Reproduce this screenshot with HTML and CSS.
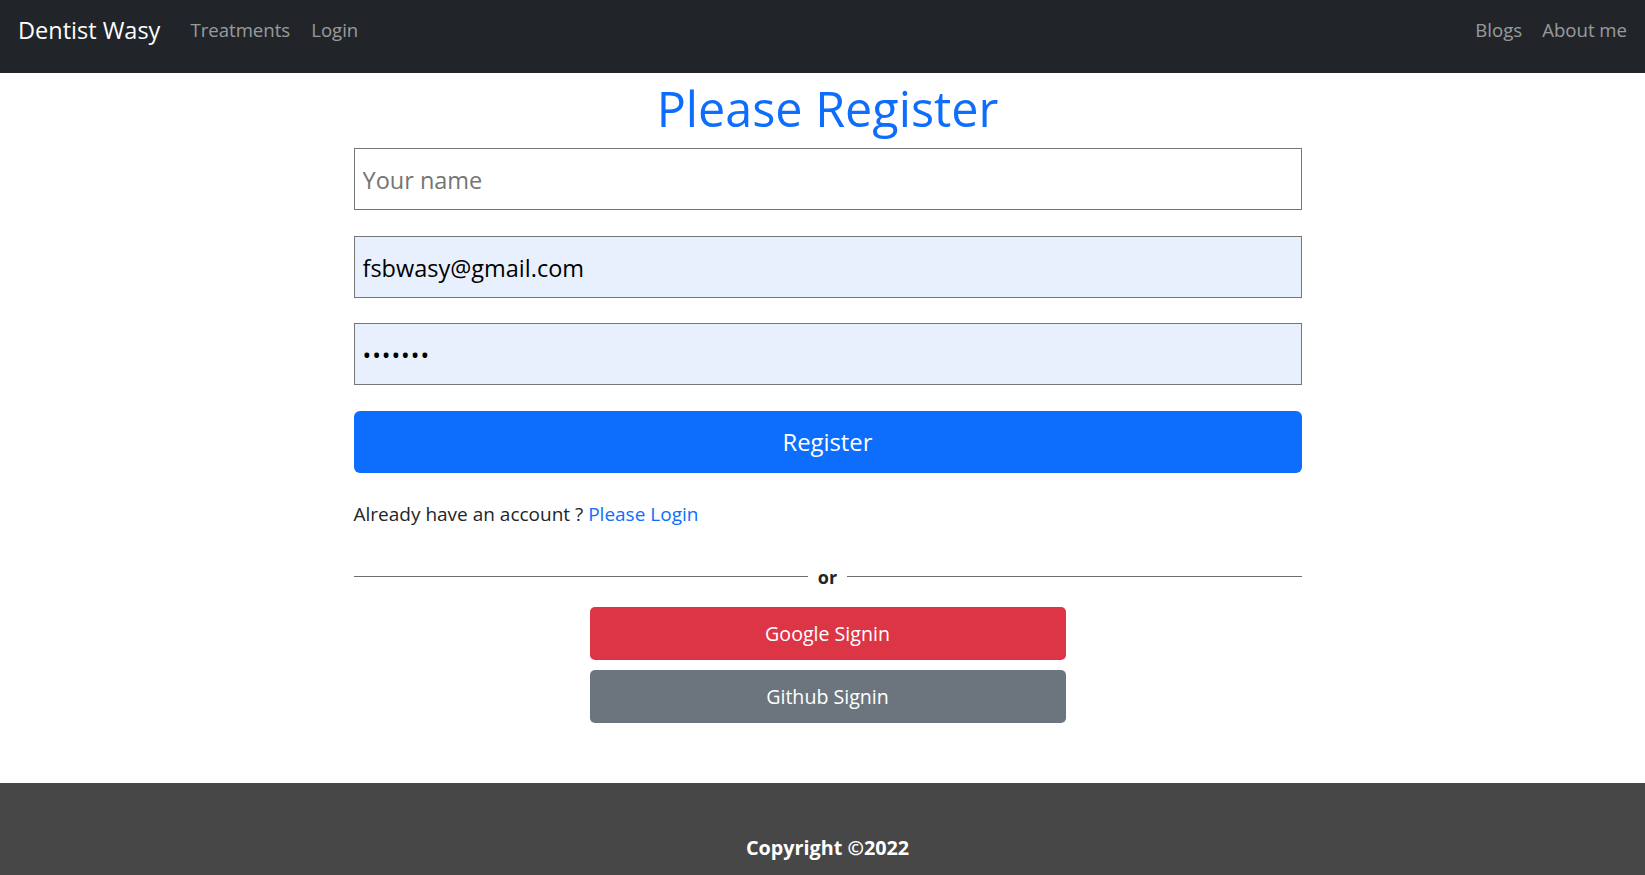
FILE: index.html
```html
<!DOCTYPE html>
<html lang="en">
<head>
<meta charset="utf-8">
<title>Dentist Wasy - Register</title>
<link rel="stylesheet" href="styles.css">
</head>
<body>
<nav class="navbar">
  <div class="nav-left">
    <a class="brand" href="#">Dentist Wasy</a>
    <a class="nav-link" href="#">Treatments</a>
    <a class="nav-link" href="#">Login</a>
  </div>
  <div class="nav-right">
    <a class="nav-link" href="#">Blogs</a>
    <a class="nav-link" href="#">About me</a>
  </div>
</nav>
<main class="page">
  <div class="register">
    <h1 class="title">Please Register</h1>
    <form class="form">
      <input class="field" type="text" placeholder="Your name">
      <input class="field autofill" type="email" value="fsbwasy@gmail.com">
      <input class="field autofill" type="password" value="1234567">
      <button class="btn-primary" type="button">Register</button>
    </form>
    <p class="already">Already have an account ? <a href="#" class="link">Please Login</a></p>
    <div class="divider"><span class="line"></span><span class="or">or</span><span class="line"></span></div>
    <div class="social">
      <button class="btn-social google" type="button">Google Signin</button>
      <button class="btn-social github" type="button">Github Signin</button>
    </div>
  </div>
</main>
<footer class="footer">
  <p class="copy">Copyright ©2022</p>
</footer>
</body>
</html>
```
FILE: styles.css
```css
* { box-sizing: border-box; }
html, body { margin: 0; padding: 0; }
body {
  font-family: "Open Sans", "Noto Sans", sans-serif;
  color: #212529;
  background: #fff;
  overflow: hidden;
}
a { text-decoration: none; }

.navbar {
  height: 73px;
  background: #212529;
  display: flex;
  justify-content: space-between;
  align-items: flex-start;
  padding: 14px 18px 0 18px;
}
.nav-left, .nav-right {
  display: flex;
  align-items: center;
  gap: 21px;
}
.nav-right { gap: 20px; }
.brand {
  color: #fff;
  font-size: 23.5px;
  line-height: 32px;
  margin-right: 9px;
}
.nav-link {
  color: rgba(255,255,255,.55);
  font-size: 18.6px;
  line-height: 32px;
}

.page { padding-left: 10px; }
.register {
  width: 948px;
  margin: 0 auto;
}
.title {
  margin: 8px 0 0 0;
  text-align: center;
  color: #0d6efd;
  font-size: 48.5px;
  font-weight: 500;
  line-height: 55px;
}
.form {
  margin-top: 12px;
  display: flex;
  flex-direction: column;
  gap: 25.5px;
}
.field {
  height: 62px;
  border: 1px solid #767676;
  border-radius: 0;
  padding: 2px 8px 0 8px;
  font-family: inherit;
  font-size: 23.5px;
  color: #000;
  background: #fff;
  outline: none;
}
.field::placeholder { color: #757575; }
.field.autofill { background: #e8f0fe; }
.field[type=password] { letter-spacing: 1px; font-size: 23px; }
.btn-primary {
  height: 62px;
  border: none;
  border-radius: 6px;
  background: #0d6efd;
  color: #fff;
  font-family: inherit;
  font-size: 23.8px;
  padding-top: 2px;
}
.already {
  margin: 27px 0 0 0;
  font-size: 19px;
  line-height: 29px;
}
.link { color: #0d6efd; }
.divider {
  margin-top: 37px;
  display: flex;
  align-items: center;
  gap: 10px;
}
.line { flex: 1; height: 1.5px; background: #6f6f6f; }
.or { font-weight: 700; font-size: 18px; line-height: 22px; }
.social {
  margin-top: 19px;
  display: flex;
  flex-direction: column;
  align-items: center;
  gap: 10px;
}
.btn-social {
  width: 476px;
  height: 53px;
  border: none;
  border-radius: 5px;
  color: #fff;
  font-family: inherit;
  font-size: 19.6px;
}
.google { background: #dc3545; }
.github { background: #6c757d; }

.footer {
  margin-top: 60px;
  background: #474747;
  height: 93px;
  padding: 51px 0 0 10px;
  text-align: center;
}
.copy {
  margin: 0;
  color: #fff;
  font-weight: 700;
  font-size: 19.8px;
  line-height: 28px;
}
```
